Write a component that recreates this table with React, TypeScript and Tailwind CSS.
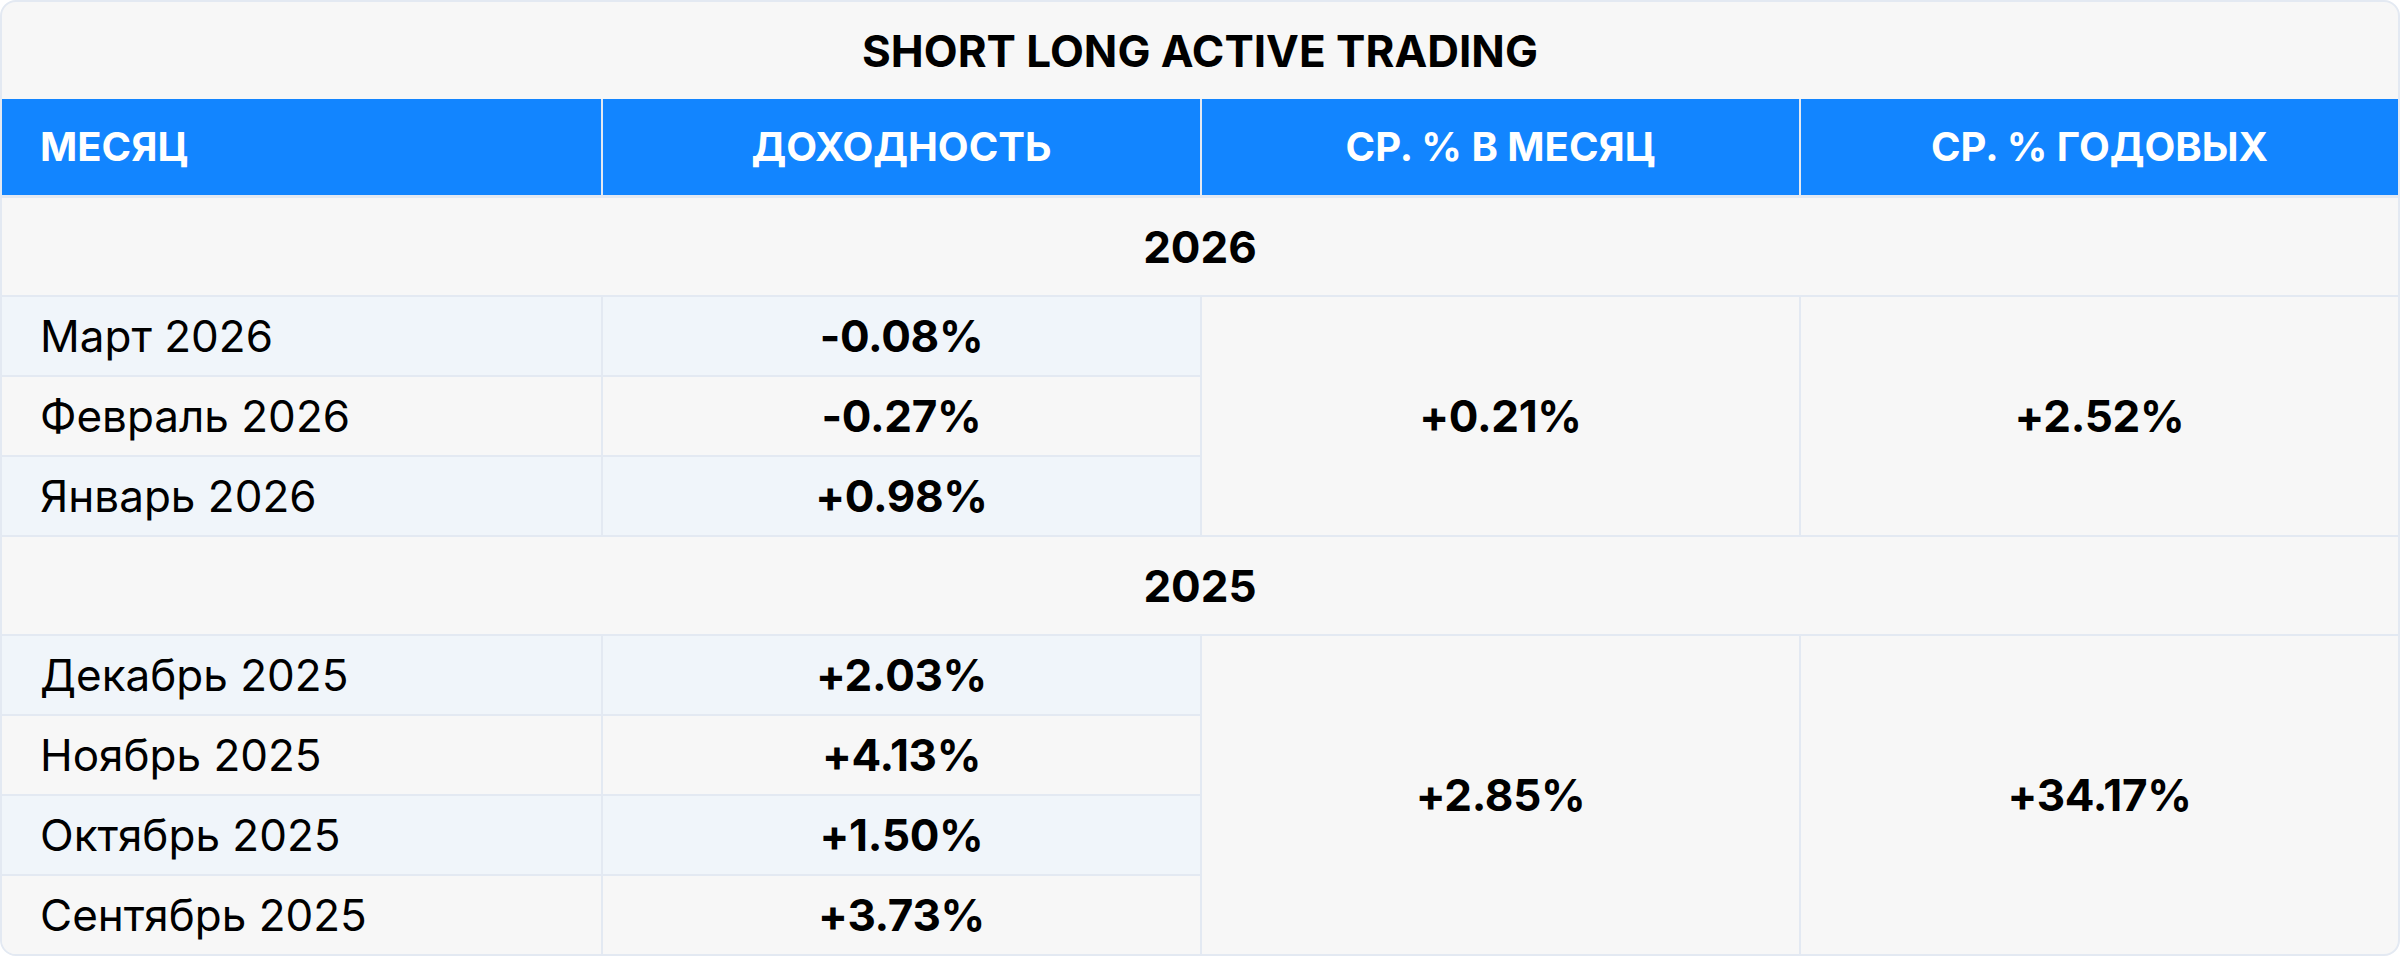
const sections = [
  {
    year: "2026",
    rows: [
      ["Март 2026", "-0.08%"],
      ["Февраль 2026", "-0.27%"],
      ["Январь 2026", "+0.98%"],
    ],
    month: "+0.21%",
    annual: "+2.52%",
  },
  {
    year: "2025",
    rows: [
      ["Декабрь 2025", "+2.03%"],
      ["Ноябрь 2025", "+4.13%"],
      ["Октябрь 2025", "+1.50%"],
      ["Сентябрь 2025", "+3.73%"],
    ],
    month: "+2.85%",
    annual: "+34.17%",
  },
];

export default function App() {
  return (
    <div className="w-[2400px] h-[956px] bg-white font-['Inter','Liberation_Sans',sans-serif] text-black">
      <div className="h-full border-2 border-[#e3e9f2] rounded-[16px] overflow-hidden bg-[#f7f7f7]">
        {/* Title */}
        <div className="h-[97px] flex items-center justify-center text-[44px] font-bold">
          SHORT LONG ACTIVE TRADING
        </div>

        {/* Header */}
        <div className="grid grid-cols-4 h-[99px] bg-[#1285ff] text-white text-[40px] font-bold border-b-[3px] border-[#e3e9f2]">
          <div className="flex items-center pl-[38px]">МЕСЯЦ</div>
          <div className="flex items-center justify-center border-l-2 border-[#e3e9f2]">
            ДОХОДНОСТЬ
          </div>
          <div className="flex items-center justify-center border-l-2 border-[#e3e9f2]">
            СР. % В МЕСЯЦ
          </div>
          <div className="flex items-center justify-center border-l-2 border-[#e3e9f2]">
            СР. % ГОДОВЫХ
          </div>
        </div>

        {sections.map((s, si) => (
          <div key={s.year}>
            <div className="h-[99px] flex items-center justify-center border-b-2 border-[#e3e9f2] text-[44px] font-bold">
              {s.year}
            </div>
            <div
              className={
                si < sections.length - 1
                  ? "flex border-b-2 border-[#e3e9f2]"
                  : "flex"
              }
            >
              <div className="w-1/2 flex flex-col">
                {s.rows.map(([label, value], i) => (
                  <div
                    key={label}
                    className={
                      (i === 0 ? "h-[78px] " : "h-[80px] border-t-2 ") +
                      (i % 2 === 0 ? "bg-[#f0f5fa] " : "bg-[#f7f7f7] ") +
                      "flex border-[#e3e9f2]"
                    }
                  >
                    <div className="w-1/2 flex items-center pl-[38px] text-[44px]">
                      {label}
                    </div>
                    <div className="w-1/2 flex items-center justify-center border-l-2 border-[#e3e9f2] text-[44px] font-bold tracking-[-0.3px]">
                      {value}
                    </div>
                  </div>
                ))}
              </div>
              <div className="w-1/4 flex items-center justify-center border-l-2 border-[#e3e9f2] text-[44px] font-bold tracking-[-0.3px]">
                {s.month}
              </div>
              <div className="w-1/4 flex items-center justify-center border-l-2 border-[#e3e9f2] text-[44px] font-bold tracking-[-0.3px]">
                {s.annual}
              </div>
            </div>
          </div>
        ))}
      </div>
    </div>
  );
}
